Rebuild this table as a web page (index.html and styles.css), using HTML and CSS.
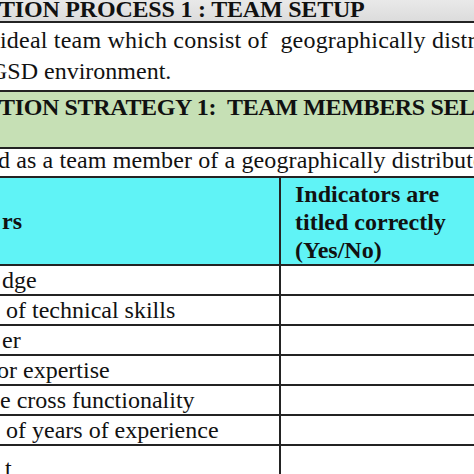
FILE: index.html
```html
<!DOCTYPE html>
<html>
<head>
<meta charset="utf-8">
<link rel="stylesheet" href="styles.css">
</head>
<body>
<div class="page">
  <div class="band band-grey"><span class="bold">TION PROCESS 1 : TEAM SETUP</span></div>
  <div class="desc">
    <div class="line wide">ideal team which consist of&nbsp; geographically distr</div>
    <div class="line cut-g">GSD environment.</div>
  </div>
  <div class="band band-green"><span class="bold">TION STRATEGY 1:&nbsp; TEAM MEMBERS SEL</span></div>
  <div class="desc2">d as a team member of a geographically distributed</div>
  <div class="table">
    <div class="thead">
      <div class="cell cell-left head-left bold">rs</div>
      <div class="cell cell-right head-right bold">
        <div>Indicators are</div>
        <div>titled correctly</div>
        <div>(Yes/No)</div>
      </div>
    </div>
    <div class="row"><div class="cell cell-left">dge</div><div class="cell cell-right"></div></div>
    <div class="row"><div class="cell cell-left indent">of technical skills</div><div class="cell cell-right"></div></div>
    <div class="row"><div class="cell cell-left">er</div><div class="cell cell-right"></div></div>
    <div class="row"><div class="cell cell-left outdent">or expertise</div><div class="cell cell-right"></div></div>
    <div class="row"><div class="cell cell-left flush">e cross functionality</div><div class="cell cell-right"></div></div>
    <div class="row"><div class="cell cell-left indent">of years of experience</div><div class="cell cell-right"></div></div>
    <div class="row row-last"><div class="cell cell-left indent tail">t</div><div class="cell cell-right"></div></div>
  </div>
</div>
</body>
</html>
```

FILE: styles.css
```css
html, body {
  margin: 0;
  padding: 0;
  background: #ffffff;
}

.page {
  width: 474px;
  height: 474px;
  overflow: hidden;
  font-family: "Liberation Serif", "Times New Roman", "DejaVu Serif", serif;
  font-size: 24px;
  color: #111111;
  display: flex;
  flex-direction: column;
  white-space: nowrap;
}

.bold {
  font-weight: bold;
}

.band {
  overflow: hidden;
  border-bottom: 2px solid #232323;
  flex: none;
}

.band-grey {
  height: 21px;
  line-height: 19px;
  background: linear-gradient(#e9e9e9, #dcdcdc);
  text-indent: -1px;
  letter-spacing: -0.2px;
}

.desc {
  height: 62px;
  padding-top: 2px;
  padding-bottom: 3px;
  line-height: 31px;
  border-bottom: 2px solid #232323;
  overflow: hidden;
  flex: none;
}

.desc .wide {
  letter-spacing: 0.2px;
}

.desc .cut-g {
  text-indent: -10px;
}

.band-green {
  height: 55px;
  line-height: 31px;
  background: #c6e0b5;
  text-indent: -1px;
  letter-spacing: -0.35px;
}

.desc2 {
  height: 27px;
  line-height: 23px;
  overflow: hidden;
  border-bottom: 2px solid #232323;
  text-indent: -2px;
  letter-spacing: 0.12px;
  flex: none;
}

.table {
  display: flex;
  flex-direction: column;
}

.thead,
.row {
  display: grid;
  grid-template-columns: 279px 1fr;
  border-bottom: 2px solid #232323;
  flex: none;
}

.thead {
  height: 86px;
  background: #60f3f6;
}

.row {
  height: 28px;
  line-height: 28px;
}

.cell {
  overflow: hidden;
}

.cell-right {
  border-left: 2px solid #232323;
}

.head-left {
  display: flex;
  align-items: center;
  line-height: 28px;
  padding-left: 2px;
}

.head-right {
  padding-top: 2px;
  padding-left: 14px;
  line-height: 28px;
}

.row .cell-left {
  padding-left: 2px;
}

.row .indent {
  padding-left: 6px;
}

.row .outdent {
  padding-left: 0;
  text-indent: -3px;
}

.row .flush {
  padding-left: 0;
}

.row .tail {
  padding-left: 5px;
  line-height: 44px;
}
```
